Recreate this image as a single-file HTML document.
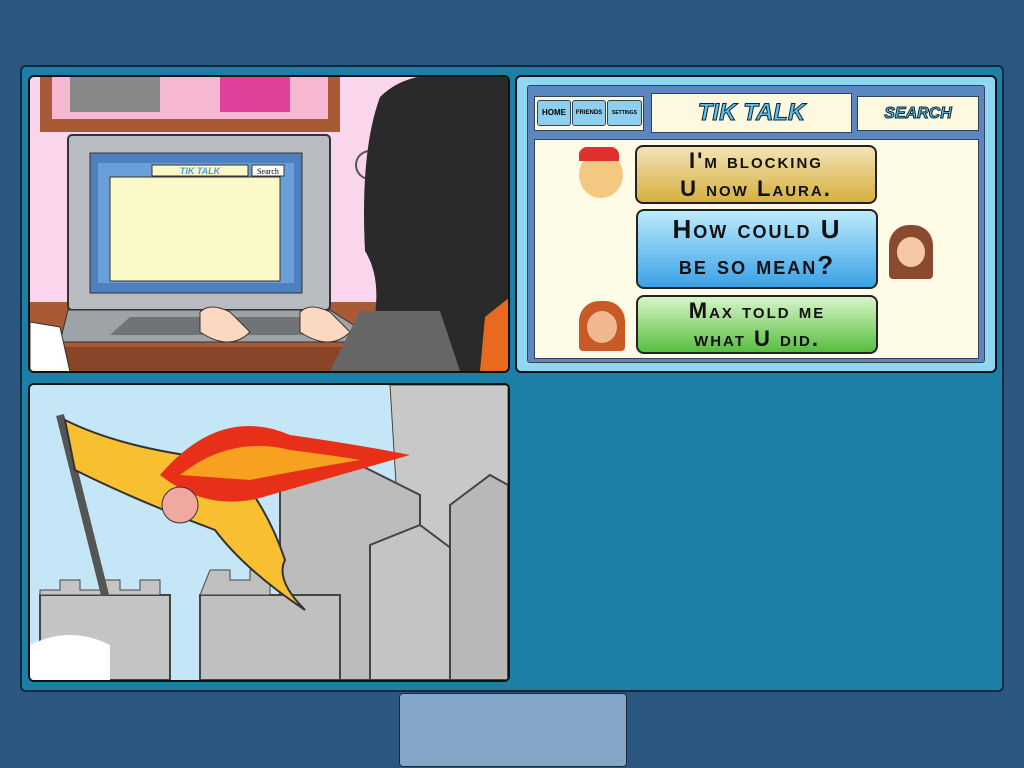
<!DOCTYPE html>
<html><head><style>
body{margin:0;width:1024px;height:768px;background:#2b5680;position:relative;overflow:hidden;font-family:"Liberation Sans",sans-serif}
.abs{position:absolute}
.main{left:20px;top:65px;width:980px;height:623px;background:#1b7fa6;border:2px solid #0f2a3c;border-radius:6px}
.p{border:2px solid #111;border-radius:6px;overflow:hidden}
.bub{position:absolute;border:2px solid #222;border-radius:8px;font-weight:bold;font-variant:small-caps;color:#111;font-size:22px;line-height:28px;letter-spacing:2px}
</style></head><body>
<div class="abs main"></div>
<!-- panel 1 -->
<div class="abs p" style="left:28px;top:75px;width:478px;height:294px;background:#f9d6ec">
<svg width="478" height="294" class="abs" style="left:0;top:0">
<rect x="10" y="0" width="300" height="55" fill="#a85a35"/>
<rect x="22" y="0" width="276" height="42" fill="#f5b8d0"/>
<rect x="40" y="0" width="90" height="35" fill="#888"/>
<rect x="190" y="0" width="70" height="35" fill="#e0409a"/>
<rect x="0" y="225" width="478" height="70" fill="#a85a35"/>
<rect x="0" y="270" width="478" height="24" fill="#8a4528"/>
<rect x="38" y="58" width="262" height="175" rx="4" fill="#b8bcc0" stroke="#333" stroke-width="2"/>
<rect x="60" y="76" width="212" height="140" fill="#4e7fbf" stroke="#333"/>
<rect x="68" y="86" width="196" height="120" fill="#6aa0d8"/>
<rect x="80" y="100" width="170" height="104" fill="#fbf8c8" stroke="#333"/>
<rect x="122" y="88" width="96" height="11" fill="#fbf8c8" stroke="#333"/>
<text x="170" y="97" font-size="9" text-anchor="middle" fill="#4aa0d8" font-weight="bold" font-style="italic">TIK TALK</text>
<rect x="222" y="88" width="32" height="11" fill="#fff" stroke="#333"/>
<text x="238" y="97" font-size="8" text-anchor="middle" font-family="Liberation Serif">Search</text>
<polygon points="38,233 300,233 350,265 30,265" fill="#9ea3a8" stroke="#333"/>
<polygon points="100,240 290,240 320,258 80,258" fill="#707478"/>
<path d="M170,235 q10,-10 30,0 l20,20 q-20,20 -50,0z" fill="#fcd8c0" stroke="#333"/>
<path d="M270,235 q10,-10 30,0 l20,20 q-20,20 -50,0z" fill="#fcd8c0" stroke="#333"/>
<path d="M335,110 q0,-40 20,-50 l0,100 q-20,0 -20,-50z" fill="#fcd8c0"/>
<circle cx="340" cy="88" r="14" fill="none" stroke="#555" stroke-width="2"/>
<path d="M350,20 q30,-30 90,-20 l40,0 l0,294 l-150,0 q30,-80 5,-120 q-5,-100 15,-154z" fill="#2a2a2a"/>
<path d="M300,294 l30,-60 l80,0 l20,60z" fill="#666"/>
<path d="M455,240 l25,-20 l0,74 l-30,0z" fill="#e86a20"/>
<path d="M0,245 l30,5 l10,45 l-40,0z" fill="#fff" stroke="#333"/>
</svg></div>
<!-- panel 2 -->
<div class="abs" style="left:515px;top:75px;width:478px;height:294px;background:#8ed6f2;border:2px solid #111;border-radius:6px">
<div class="abs" style="left:10px;top:8px;width:456px;height:276px;background:#5b86c0;border:1px solid #345;border-radius:3px"></div>
<div class="abs" style="left:17px;top:19px;width:108px;height:33px;background:#fdf8e0;border:1px solid #345"></div>
<div class="abs" style="left:20px;top:23px;width:32px;height:24px;background:#8ecff0;border:1px solid #345;border-radius:3px;font-size:8px;font-weight:bold;text-align:center;line-height:24px">HOME</div>
<div class="abs" style="left:55px;top:23px;width:32px;height:24px;background:#8ecff0;border:1px solid #345;border-radius:3px;font-size:6px;font-weight:bold;text-align:center;line-height:24px">FRIENDS</div>
<div class="abs" style="left:90px;top:23px;width:33px;height:24px;background:#8ecff0;border:1px solid #345;border-radius:3px;font-size:5px;font-weight:bold;text-align:center;line-height:24px">SETTINGS</div>
<div class="abs" style="left:134px;top:16px;width:199px;height:38px;background:#fdf8e0;border:1px solid #345;text-align:center;line-height:38px;font-size:24px;font-weight:bold;font-style:italic;color:#5bc4ee;-webkit-text-stroke:1px #123">TIK TALK</div>
<div class="abs" style="left:340px;top:19px;width:120px;height:33px;background:#fdf8e0;border:1px solid #345;text-align:center;line-height:33px;font-size:16px;font-weight:bold;font-style:italic;color:#5bc4ee;-webkit-text-stroke:1px #123">SEARCH</div>
<div class="abs" style="left:17px;top:62px;width:443px;height:218px;background:#fefbe6;border:1px solid #345"></div>
<div class="bub" style="left:118px;top:68px;width:238px;height:55px;background:linear-gradient(#f3e2b4,#d6b040);text-align:center">I'm blocking<br>U now Laura.</div>
<div class="bub" style="left:119px;top:132px;width:238px;height:76px;background:linear-gradient(#bdeafc,#3aa2e6);text-align:center;font-size:26px;line-height:36px">How could U<br>be so mean?</div>
<div class="bub" style="left:119px;top:218px;width:238px;height:55px;background:linear-gradient(#d8f4c8,#58be40);text-align:center">Max told me<br>what U did.</div>
<div class="abs" style="left:62px;top:75px;width:44px;height:46px;background:#f4c880;border-radius:50%"></div>
<div class="abs" style="left:62px;top:70px;width:40px;height:14px;background:#e03030;border-radius:8px 8px 0 0"></div>
<div class="abs" style="left:372px;top:148px;width:44px;height:54px;background:#8a4a30;border-radius:20px 20px 4px 4px"></div>
<div class="abs" style="left:380px;top:160px;width:28px;height:30px;background:#f4c8a0;border-radius:50%"></div>
<div class="abs" style="left:62px;top:224px;width:46px;height:50px;background:#c85a28;border-radius:20px 20px 4px 4px"></div>
<div class="abs" style="left:70px;top:234px;width:30px;height:32px;background:#f0b890;border-radius:50%"></div>
</div>
<!-- panel 3 -->
<div class="abs p" style="left:28px;top:383px;width:478px;height:295px;background:#bfe4f6">
<svg width="478" height="295" class="abs" style="left:0;top:0">
<path d="M0,0 h478 v295 h-478z" fill="#c4e6f6"/>
<path d="M360,0 h118 v295 h-100z" fill="#c8c8c8" stroke="#444"/>
<path d="M250,100 l80,-20 l60,30 l0,185 h-140z" fill="#bcbcbc" stroke="#444" stroke-width="2"/>
<path d="M340,160 l50,-20 l40,30 v125 h-90z" fill="#c4c4c4" stroke="#444" stroke-width="2"/>
<path d="M420,120 l40,-30 l18,10 v195 h-58z" fill="#b8b8b8" stroke="#444" stroke-width="2"/>
<path d="M170,210 h140 v85 h-140z" fill="#c0c0c0" stroke="#444" stroke-width="2"/>
<path d="M170,210 l10,-25 h20 v10 h20 v-10 h20 v25z" fill="#c0c0c0" stroke="#444"/>
<path d="M10,210 h130 v85 h-130z" fill="#c4c4c4" stroke="#444" stroke-width="2"/>
<path d="M10,205 h20 v-10 h20 v10 h20 v-10 h20 v10 h20 v-10 h20 v15 h-120z" fill="#c4c4c4" stroke="#444"/>
<line x1="30" y1="30" x2="75" y2="210" stroke="#555" stroke-width="8"/>
<path d="M35,35 q60,30 160,40 q40,40 60,100 q-10,20 20,50 q-60,-40 -90,-80 q-80,-30 -140,-60z" fill="#f8c030" stroke="#333" stroke-width="2"/>
<path d="M130,90 q60,-70 130,-40 q70,10 120,20 q-70,20 -140,40 q-60,20 -110,-20z" fill="#e83018"/>
<path d="M150,90 q50,-40 110,-25 q40,5 70,10 q-60,10 -110,20z" fill="#f8a020"/>
<circle cx="150" cy="120" r="18" fill="#f0a8a0" stroke="#333"/>
<path d="M0,260 q40,-20 80,0 v35 h-80z" fill="#fff"/>
</svg></div>
<!-- bottom button -->
<div class="abs" style="left:399px;top:693px;width:226px;height:72px;background:#84a6c9;border:1px solid #1a2a3a;border-radius:4px"></div>
</body></html>
